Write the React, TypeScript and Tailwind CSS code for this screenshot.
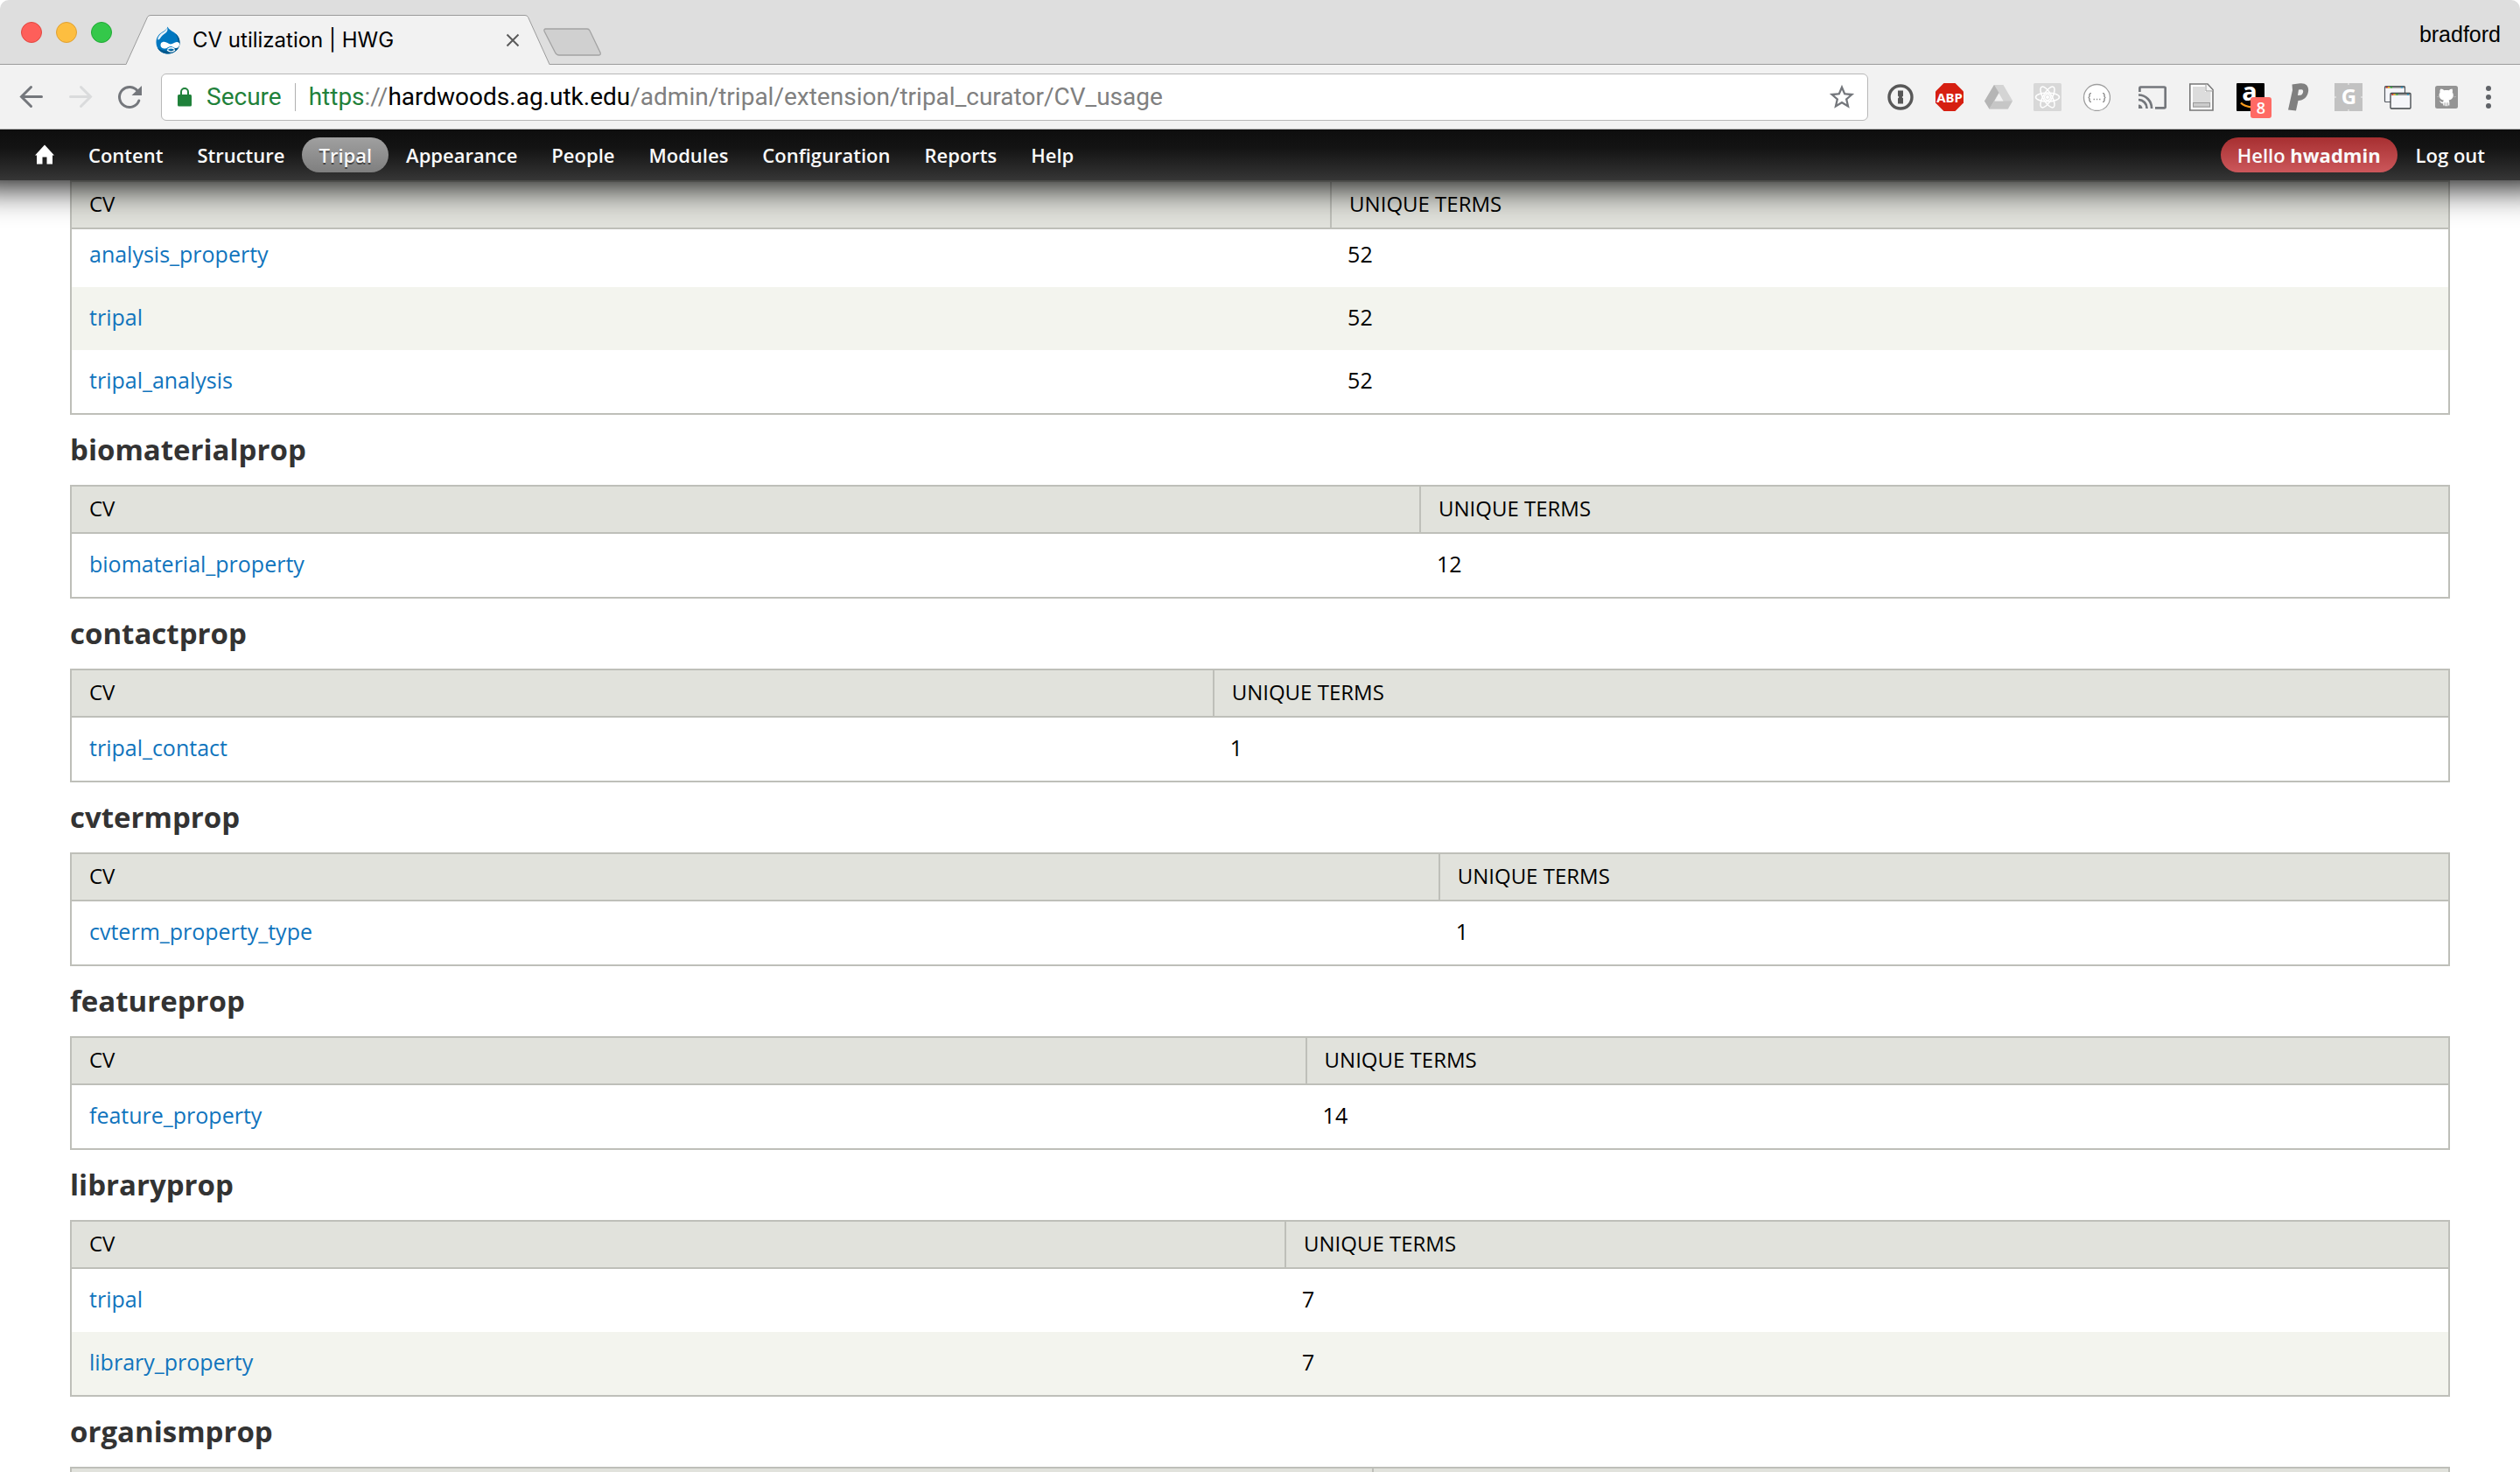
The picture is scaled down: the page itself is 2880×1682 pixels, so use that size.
import React from "react";
import { MdStarBorder } from "react-icons/md";

type Term = { name: string; count: number };
type Section = { title?: string; split: string; terms: Term[] };

const sections: Section[] = [
  {
    split: "w-[52.95%]",
    terms: [
      { name: "analysis_property", count: 52 },
      { name: "tripal", count: 52 },
      { name: "tripal_analysis", count: 52 },
    ],
  },
  { title: "biomaterialprop", split: "w-[56.7%]", terms: [{ name: "biomaterial_property", count: 12 }] },
  { title: "contactprop", split: "w-[48%]", terms: [{ name: "tripal_contact", count: 1 }] },
  { title: "cvtermprop", split: "w-[57.5%]", terms: [{ name: "cvterm_property_type", count: 1 }] },
  { title: "featureprop", split: "w-[51.9%]", terms: [{ name: "feature_property", count: 14 }] },
  {
    title: "libraryprop",
    split: "w-[51.03%]",
    terms: [
      { name: "tripal", count: 7 },
      { name: "library_property", count: 7 },
    ],
  },
  { title: "organismprop", split: "w-[54.7%]", terms: [] },
];

const menu = ["Content", "Structure", "Tripal", "Appearance", "People", "Modules", "Configuration", "Reports", "Help"];

function DrupalIcon() {
  return (
    <svg viewBox="0 0 28 32" className="h-8 w-7 shrink-0" aria-hidden="true">
      <path d="M13.500 0.500C15 4 18 5 21 7c4 3 6.500 6.500 6.500 11.500C27.500 26 21.500 31.500 14 31.500S.5 26 .5 18.500C.5 13 3 9.500 7 7c3-2 5.500-3 6.500-6.500z" fill="#0077c0" />
      <path d="M22 8c4 5 5 13 0 17-5 3.500-14 4-20-.5C4 29 9 31.500 14 31.500c7.500 0 13.500-5.500 13.500-13C27.500 14 25.500 10.500 22 8z" fill="#00598e" />
      <path d="M13 1.500C12 6 7.500 6.500 4.500 10 2.500 12 2 15 2.500 15.500c3-.5 3-4 7-6.500 3-2 5-4 3.500-7.500z" fill="#e8f3fa" />
      <path d="M8 18c4-1 6 2.500 9 2.500s4-2.500 7-2.500c2.500 0 3.500 1.500 3 3.500-.5 2.500-2 3.500-4 3.500-2.500 0-3.500-2-6-2-3 0-4 3-7.500 2.500C6.500 25 5.500 23.500 5.500 21.500 5.500 19.500 6.500 18.300 8 18z" fill="#fff" />
      <path d="M14 26c2-1.500 5-1.500 7 0M13.500 27.500c2.500 2 5.500 2 8 0" fill="none" stroke="#fff" strokeWidth="1.400" strokeLinecap="round" />
    </svg>
  );
}

function TabStrip() {
  return (
    <div className="flex h-[74px] items-end rounded-t-[10px] border-b border-[#9b9b9b] bg-[#dedede]">
      <div className="flex gap-4 self-center pl-6">
        <button aria-label="Close window" className="size-6 rounded-full border border-[#e2463f] bg-[#fe5f5a]" />
        <button aria-label="Minimize window" className="size-6 rounded-full border border-[#dfa032] bg-[#fdbe40]" />
        <button aria-label="Zoom window" className="size-6 rounded-full border border-[#1fa934] bg-[#34c84a]" />
      </div>
      <div className="relative -mb-px ml-4 flex h-[57px] w-[484px] items-center pr-[34px] pl-[34px]">
        <svg viewBox="0 0 484 57" preserveAspectRatio="none" className="absolute inset-0 size-full" aria-hidden="true">
          <path d="M0 57L24.500 2.500Q25.500.5 28 .5H456Q458.500.5 459.500 2.500L484 57z" fill="#f2f2f2" />
          <path d="M0 56.500L24.500 2.500Q25.500.5 28 .5H456Q458.500.5 459.500 2.500L484 56.500" fill="none" stroke="#9b9b9b" />
        </svg>
        <div className="relative flex min-w-0 flex-1 items-center gap-3.5">
          <DrupalIcon />
          <span className="flex-1 truncate font-['Inter','Liberation_Sans',sans-serif] text-[24px] leading-8 text-black">CV utilization | HWG</span>
          <button aria-label="Close tab" className="flex size-4 items-center justify-center">
            <svg viewBox="0 0 16 16" className="size-4" aria-hidden="true">
              <path d="M1.500 1.500l13 13M14.500 1.500l-13 13" stroke="#5a5a5a" strokeWidth="2" />
            </svg>
          </button>
        </div>
      </div>
      <button aria-label="New tab" className="-ml-2 mb-[9px] h-8 w-[68px]">
        <svg viewBox="0 0 68 32" className="h-8 w-[68px]" aria-hidden="true">
          <path d="M3.500 1H51q2 0 3 2l12 25q1 3-1.500 3H19q-3 0-4.500-3L2 3.500Q1.500 1 3.500 1z" fill="#d0d0d0" stroke="#a3a3a3" strokeWidth="1.300" />
        </svg>
      </button>
      <button className="mr-[22px] mb-[18px] ml-auto font-['Liberation_Sans',sans-serif] text-[25px] leading-8 text-black">bradford</button>
    </div>
  );
}

function NavIcon({ label, children }: { label: string; children: React.ReactNode }) {
  return (
    <button aria-label={label} className="flex size-8 shrink-0 items-center justify-center">
      {children}
    </button>
  );
}

function Extensions() {
  return (
    <div className="ml-[21px] flex items-center gap-6">
      <NavIcon label="1Password">
        <svg viewBox="0 0 32 32" className="size-8">
          <circle cx="16" cy="16" r="13" fill="#f4f4f4" stroke="#585858" strokeWidth="3.400" />
          <path d="M13 8.500h6v6.200l-1.400 1.300 1.400 1.300v6.200h-6v-6l1.400-1.500L13 14.500z" fill="#585858" />
        </svg>
      </NavIcon>
      <NavIcon label="Adblock Plus">
        <svg viewBox="0 0 32 32" className="size-8">
          <path d="M9.500 0h13L32 9.500v13L22.500 32h-13L0 22.500v-13z" fill="#d61f11" />
          <text x="16" y="22" textAnchor="middle" className="font-['Noto_Sans',sans-serif] text-[15px] font-bold" fill="#fff">ABP</text>
        </svg>
      </NavIcon>
      <NavIcon label="Google Drive">
        <svg viewBox="0 0 32 32" className="size-8">
          <path d="M11 2h10.500L32 20l-5 9.500H5.500L0 20.500z" fill="#d4d4d4" />
          <path d="M11 2l5.500 9L5.500 29.500 0 20.500z" fill="#b5b5b5" />
          <path d="M11 20.500H32L26.500 29.500H5.500z" fill="#c6c6c6" />
          <path d="M16.500 11.500l5 9H11.500z" fill="#f2f2f2" />
        </svg>
      </NavIcon>
      <NavIcon label="React Developer Tools">
        <svg viewBox="0 0 32 32" className="size-8">
          <rect width="32" height="32" rx="1.500" fill="#d8d8d8" />
          <g fill="none" stroke="#fff" strokeWidth="1.500">
            <ellipse cx="16" cy="16" rx="13.500" ry="5" />
            <ellipse cx="16" cy="16" rx="13.500" ry="5" transform="rotate(60 16 16)" />
            <ellipse cx="16" cy="16" rx="13.500" ry="5" transform="rotate(120 16 16)" />
            <circle cx="16" cy="16" r="3.400" fill="#d8d8d8" />
          </g>
          <circle cx="16" cy="16" r="2" fill="#fff" />
        </svg>
      </NavIcon>
      <NavIcon label="JSON Viewer">
        <svg viewBox="0 0 32 32" className="size-8">
          <circle cx="16.500" cy="16.500" r="15" fill="#fff" stroke="#9f9f9f" strokeWidth="1.300" />
          <path d="M10 11.500q-2 0-2 1.500v2q0 1.500-1.500 1.500Q8 16.500 8 18v2q0 1.500 2 1.500M23 11.500q2 0 2 1.500v2q0 1.500 1.500 1.500-1.500 0-1.500 1.500v2q0 1.500-2 1.500" fill="none" stroke="#777" strokeWidth="1.200" />
          <path d="M12.500 18.500h1.500M15.800 18.500h1.500M19 18.500h1.500" stroke="#999" strokeWidth="1.300" />
        </svg>
      </NavIcon>
      <div className="ml-2 flex">
        <NavIcon label="Cast">
          <svg viewBox="0 0 32 32" className="size-8" fill="none" stroke="#74777c" strokeWidth="2.700">
            <path d="M1.400 10V5.500q0-1 1-1h27q1.300 0 1.300 1V27q0 1.300-1.300 1.300H19" />
            <path d="M0 13.500A15 15 0 0 1 15 28.800V29M0 19a9.500 9.500 0 0 1 9.500 10" />
            <path d="M0 24.500a4.500 4.500 0 0 1 4.500 4.500H0z" fill="#74777c" stroke="none" />
          </svg>
        </NavIcon>
      </div>
      <NavIcon label="Reader">
        <svg viewBox="0 0 32 32" className="size-8">
          <path d="M2.800 1H23l6 6.500V31H2.800z" fill="#fff" stroke="#777" strokeWidth="1.600" />
          <path d="M6 4h14v6h6.500v18.500H6z" fill="#dcdcdc" />
          <path d="M21 1v8h8" fill="#f4f4f4" stroke="#999" />
          <rect x="6.500" y="22.500" width="19" height="4.500" fill="#ccc" stroke="#999" />
        </svg>
      </NavIcon>
      <NavIcon label="Amazon Assistant, 8 notifications">
        <span className="relative block size-8">
          <svg viewBox="0 0 32 32" className="size-8 overflow-visible">
            <rect width="32" height="32" rx="1" fill="#000" />
            <text x="15" y="20" textAnchor="middle" className="font-['Open_Sans',sans-serif] text-[29px] font-bold" fill="#fff">a</text>
            <path d="M5 22.500q4 4 12 5" fill="none" stroke="#f79a1c" strokeWidth="2.400" />
          </svg>
          <span className="absolute top-4 left-4 flex size-6 items-center justify-center rounded-[3px] bg-[#ff6a64] font-['Open_Sans',sans-serif] text-[18px] leading-6 font-semibold text-white">8</span>
        </span>
      </NavIcon>
      <NavIcon label="Pinterest">
        <svg viewBox="0 0 32 32" className="size-8">
          <path d="M7.500 1.500l9-1.200c7-.8 10.500 3.200 9.500 9.500-1 6.500-5.500 10-11.500 10.200l-2.500 11.500-9-1L8 8z" fill="#808080" />
          <path d="M15 7.500l3-.3c2 0 2.500 1.300 2 3.300s-1.500 3.200-3 3.300l-3 .2z" fill="#f2f2f2" />
        </svg>
      </NavIcon>
      <NavIcon label="Google Translate">
        <svg viewBox="0 0 32 32" className="size-8 overflow-visible">
          <rect width="32" height="32" fill="#c2c2c2" />
          <path d="M16 0v2M16 30v2M0 16h2M30 16h2" stroke="#f2f2f2" />
          <text x="16.500" y="24" textAnchor="middle" className="font-['Open_Sans',sans-serif] text-[24px] font-bold" fill="#fff">G</text>
        </svg>
      </NavIcon>
      <NavIcon label="Tab windows">
        <svg viewBox="0 0 32 32" className="size-8">
          <rect x="1.500" y="3.500" width="23" height="18" rx="1" fill="#f5f6fa" stroke="#555a60" strokeWidth="1.200" />
          <path d="M2 4.800h22" stroke="#777" strokeWidth="1.500" />
          <path d="M3 4.800h1.500" stroke="#e22" strokeWidth="1.500" />
          <path d="M5 4.800h2" stroke="#fb0" strokeWidth="1.500" />
          <path d="M8 4.800h2" stroke="#3b3" strokeWidth="1.500" />
          <path d="M20 4.800h2" stroke="#29c" strokeWidth="1.500" />
          <rect x="8" y="11.500" width="23" height="17.500" rx="1" fill="#f5f6fa" stroke="#3e4347" strokeWidth="1.300" />
          <path d="M8.500 13h22" stroke="#777" strokeWidth="1.500" />
          <path d="M9.500 13H11" stroke="#e22" strokeWidth="1.500" />
          <path d="M11.500 13h2" stroke="#fb0" strokeWidth="1.500" />
          <path d="M14.500 13h2" stroke="#3b3" strokeWidth="1.500" />
          <path d="M27 13h2" stroke="#29c" strokeWidth="1.500" />
        </svg>
      </NavIcon>
      <NavIcon label="GitHub">
        <svg viewBox="0 0 32 32" className="size-8">
          <rect x="3" y="3" width="26" height="26" rx="2.500" fill="#949494" />
          <path d="M9.500 6.500c1.500 0 3 1 4 1.800 1.500-.4 3.500-.4 5 0 1-.8 2.500-1.800 4-1.800.6 1.500.5 3 .2 4 2.300 3 1 8.500-4.200 9 .7.7.8 1.600.8 2.500v3.500h-1.300v-3.300h-.8v4h-1.200v-4h-.6v4h-1.200v-4h-.7v3.300h-1.300v-2.300c-3 .4-3-2-4.500-3 2.200-.5 2 2 4.500 1.400 0-.8.200-1.500.6-2.100-5-.6-6.500-6-4.200-9-.3-1-.4-2.500.9-4z" fill="#fff" />
          <path d="M5 15.500l3.500.3M27 15.500l-3.500.3" stroke="#bbb" strokeWidth=".7" />
        </svg>
      </NavIcon>
    </div>
  );
}

const pageUrl = {
  scheme: "https",
  host: "hardwoods.ag.utk.edu",
  path: "/admin/tripal/extension/tripal_curator/CV_usage",
};

function Toolbar() {
  return (
    <div className="flex h-[74px] items-center border-b border-[#b4b4b4] bg-[#f2f2f2] px-5">
      <div className="mr-5 flex gap-6">
        <NavIcon label="Back">
          <svg viewBox="0 0 32 32" className="size-8" fill="none" stroke="#74777c" strokeWidth="3" strokeLinecap="round">
            <path d="M27.500 15.500H5M15.500 4.500L4.500 15.500l11 11" />
          </svg>
        </NavIcon>
        <NavIcon label="Forward">
          <svg viewBox="0 0 32 32" className="size-8" fill="none" stroke="#dadbdc" strokeWidth="3" strokeLinecap="round">
            <path d="M4.500 15.500H27M16.500 4.500l11 11-11 11" />
          </svg>
        </NavIcon>
        <NavIcon label="Reload">
          <svg viewBox="0 0 32 32" className="size-8">
            <path d="M25.500 9.500A11.500 11.500 0 1 0 26.800 20" fill="none" stroke="#74777c" strokeWidth="3" strokeLinecap="round" />
            <path d="M30 3v11H18.500z" fill="#74777c" />
          </svg>
        </NavIcon>
      </div>
      <div className="flex h-[54px] min-w-0 flex-1 items-center rounded-md border border-[#b8b8b8] bg-white pr-3 pl-[18px] font-['Roboto','Liberation_Sans',sans-serif] text-[28px] leading-9">
        <svg viewBox="0 0 16 22" className="mr-[17px] h-[22px] w-4 shrink-0" aria-hidden="true">
          <rect y="8" width="16" height="13.500" rx="1.500" fill="#1f813a" />
          <path d="M4 9V5a4 4 0 0 1 8 0v4" fill="none" stroke="#1f813a" strokeWidth="2" />
        </svg>
        <span className="text-[#1f813a]">Secure</span>
        <span className="mx-[15px] h-8 w-px shrink-0 bg-[#b0b0b0]" />
        <div className="relative min-w-0 flex-1">
          <div aria-hidden="true" className="truncate text-[#808080]">
            <span className="text-[#1f813a]">{pageUrl.scheme}</span>://
            <span className="text-black">{pageUrl.host}</span>
            {pageUrl.path}
          </div>
          <input
            aria-label="Address"
            defaultValue={`${pageUrl.scheme}://${pageUrl.host}${pageUrl.path}`}
            className="absolute inset-0 w-full bg-transparent text-transparent caret-black outline-none"
          />
        </div>
        <button aria-label="Bookmark this page" className="shrink-0 text-[#74777c]">
          <MdStarBorder className="size-[34px]" />
        </button>
      </div>
      <Extensions />
      <button aria-label="Chrome menu" className="ml-4 flex size-8 shrink-0 flex-col items-center justify-center gap-1">
        <span className="size-1.5 rounded-full bg-[#606368]" />
        <span className="size-1.5 rounded-full bg-[#606368]" />
        <span className="size-1.5 rounded-full bg-[#606368]" />
      </button>
    </div>
  );
}

function AdminBar() {
  return (
    <nav className="relative z-10 h-[58px] text-[22px] leading-10 font-semibold text-[#fafafa]">
      <div className="absolute inset-y-0 -inset-x-10 bg-linear-to-b from-[#0e0e0e] via-[#131313] via-35% to-[#363636] shadow-[0_6px_40px_#000]" />
      <div className="relative flex h-full items-center pr-5 pl-10">
        <a href="#home" aria-label="Home" className="mr-5 block">
          <svg viewBox="0 0 22 24" className="h-6 w-[22px]" aria-hidden="true">
            <path d="M11 .5L0 12.500h2V22.500h6.500v-8h5v8H20v-10h2z" fill="#fff" />
          </svg>
        </a>
        <ul className="flex gap-px">
          {menu.map((item) => (
            <li key={item}>
              <a
                href={`#${item}`}
                className={
                  item === "Tripal"
                    ? "block rounded-full bg-linear-to-b from-[#a0a0a0] to-[#7f7f7f] px-[19px] text-shadow-[0_2px_0_#444]"
                    : "block px-[19px]"
                }
              >
                {item}
              </a>
            </li>
          ))}
        </ul>
        <ul className="ml-auto flex gap-px">
          <li>
            <a href="#user" className="block rounded-full bg-linear-to-b from-[#a72f31] to-[#cc575b] px-[19px]">
              Hello <strong className="font-bold">hwadmin</strong>
            </a>
          </li>
          <li>
            <a href="#logout" className="block px-5">Log out</a>
          </li>
        </ul>
      </div>
    </nav>
  );
}

function TermTable({ section, first }: { section: Section; first: boolean }) {
  return (
    <table className="w-full table-fixed border-separate border-spacing-0 border-2 border-[#bebfb9] text-left">
      <thead className="bg-[#e1e2dc] text-[24px] leading-[34px] text-black">
        <tr>
          <th scope="col" className={`${section.split} border-b-2 border-[#bebfb9] pt-2 pr-5 pb-2.5 pl-5 font-normal`}>CV</th>
          <th scope="col" className="border-b-2 border-l-2 border-[#bebfb9] px-5 pt-2 pb-2.5 font-normal">UNIQUE TERMS</th>
        </tr>
      </thead>
      <tbody className="text-[25px] leading-9 text-black">
        {section.terms.map((term, i) => {
          const top = first && i === 0 ? "pt-2.5" : "pt-4";
          return (
            <tr key={term.name} className={i % 2 ? "bg-[#f3f4ee]" : "bg-white"}>
              <td className={`${top} px-5 pb-5`}>
                <a href={`#${term.name}`} className="text-[#1074bd]">{term.name}</a>
              </td>
              <td className={`${top} px-5 pb-5`}>{term.count}</td>
            </tr>
          );
        })}
      </tbody>
    </table>
  );
}

export default function App() {
  return (
    <div className="h-screen overflow-hidden bg-white font-['Open_Sans','Noto_Sans',sans-serif]">
      <header className="relative z-20">
        <TabStrip />
        <Toolbar />
      </header>
      <AdminBar />
      <main className="px-20">
        {sections.map((section, i) => (
          <section key={section.title ?? "analysisprop"}>
            {section.title && <h3 className="py-5 text-[33px] leading-10 font-bold text-[#333]">{section.title}</h3>}
            <TermTable section={section} first={i === 0} />
          </section>
        ))}
      </main>
    </div>
  );
}
